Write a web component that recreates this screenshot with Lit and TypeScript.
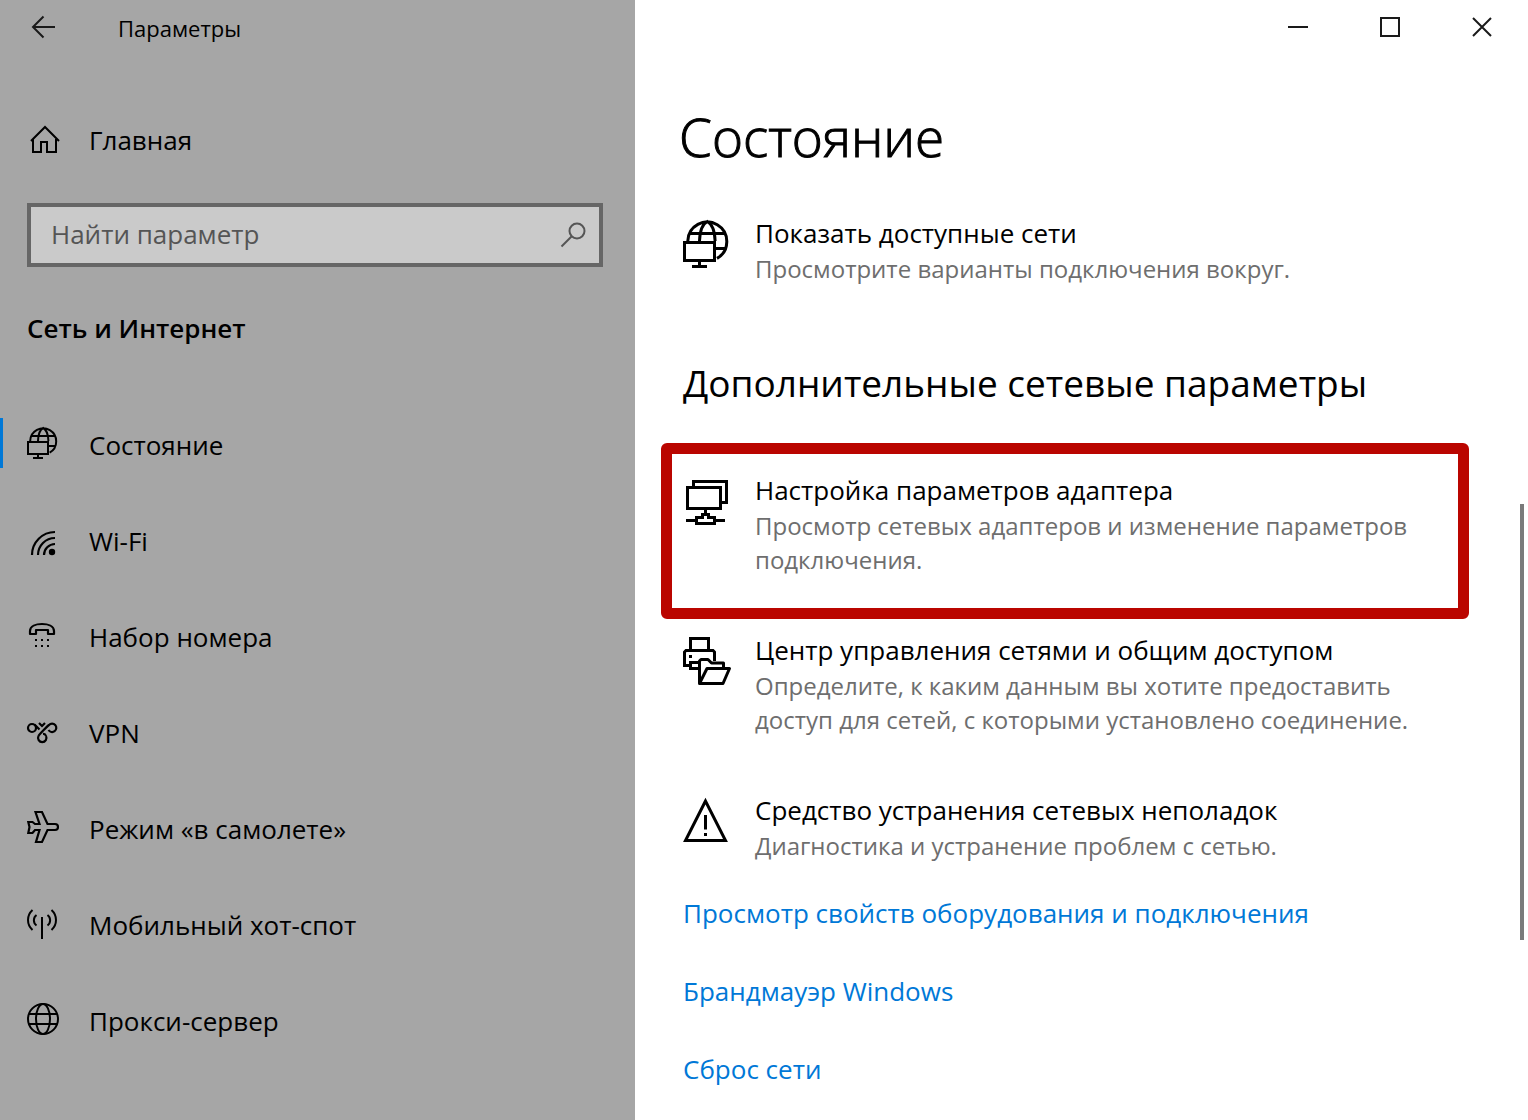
import { LitElement, html, svg, css, nothing } from "lit";
import { customElement, property, state } from "lit/decorators.js";
import { classMap } from "lit/directives/class-map.js";

interface Glyph {
  box: number;
  stroke: number;
  art: unknown;
}

const glyphs: Record<string, Glyph> = {
  back: {
    box: 24,
    stroke: 2,
    art: svg`<path d="M11.5 1.5 1 12l10.5 10.5M1 12H23" />`,
  },
  minimize: { box: 20, stroke: 2, art: svg`<path d="M0 10H20" />` },
  maximize: { box: 20, stroke: 2, art: svg`<path d="M1 1H19V19H1Z" />` },
  close: { box: 20, stroke: 2, art: svg`<path d="M1 1 19 19M19 1 1 19" />` },
  home: {
    box: 32,
    stroke: 2,
    art: svg`<path d="M2 17 16 3 30 17M4 15V28H12V18H18V28H27V15" />`,
  },
  search: {
    box: 26,
    stroke: 2,
    art: svg`<circle cx="17" cy="9" r="7.5" /><path d="M11.5 14.5 1.5 24.5" />`,
  },
  network: {
    box: 48,
    stroke: 3,
    art: svg`<path d="M4.8 21A19.5 19.5 0 1 1 34 38.4M5.5 13.5H43M33 28.5H42.5M16.5 21C16.8 12 19.5 4 24.3 1.5C29 4 31.8 12 32.1 21" />
      <path d="M1.5 22.5H31.5V40.5H1.5ZM16.5 40.5V46.5M9 46.5H24" />`,
  },
  wifi: {
    box: 32,
    stroke: 2.2,
    art: svg`<path d="M5 32A23 23 0 0 1 28 9M11 32A17 17 0 0 1 28 15M17 32A11 11 0 0 1 28 21" />
      <circle class="solid" cx="25" cy="29" r="3.2" />`,
  },
  dial: {
    box: 32,
    stroke: 2.2,
    art: svg`<path stroke-linejoin="round" d="M3 15V12C3 7 9 5 15 5S27 7 27 12V15H21V11H9V15Z" />
      <path class="solid" d="M8 20h2v2h-2zM14 20h2v2h-2zM20 20h2v2h-2zM8 26h2v2h-2zM14 26h2v2h-2zM20 26h2v2h-2z" />`,
  },
  vpn: {
    box: 32,
    stroke: 2.2,
    art: svg`<circle cx="5" cy="13" r="4" />
      <path d="M7.5 9.5 12.5 14.5M12 8 15 11 18 8" />
      <path d="M19 21A4.2 4.2 0 1 1 11.5 21C12 19.5 20 11.5 22 10A4.2 4.2 0 1 1 21.5 15" />
      <path d="M19 21C18.5 19.5 17.5 18.8 16 19" />`,
  },
  plane: {
    box: 32,
    stroke: 2.2,
    art: svg`<path d="M8.5 1H15L20.5 13H28A3 3 0 0 1 28 19H20.5L15 31H9L12.5 19H8L5.5 22H1.3L2.5 16 1.3 11H5.5L8 13H12.5Z" />`,
  },
  hotspot: {
    box: 32,
    stroke: 2,
    art: svg`<path d="M15 10V32M5.5 3C-.5 8.5-.5 17.5 5.5 23M9.5 8C6 10.5 6 16 9.5 18.5M24.5 3C30.5 8.5 30.5 17.5 24.5 23M20.5 8C24 10.5 24 16 20.5 18.5" />`,
  },
  globe: {
    box: 32,
    stroke: 2,
    art: svg`<circle cx="16" cy="16" r="15" /><ellipse cx="16" cy="16" rx="7" ry="15" />
      <path d="M2 11H30M2 21H30" />`,
  },
  adapter: {
    box: 48,
    stroke: 3,
    art: svg`<path d="M4.5 10.5H37.5V31.5H4.5ZM10.5 9V4.5H43.5V25.5H39" />
      <path d="M22.5 31.5V37M3 43.5H12M33 43.5H42M13.5 46.5V40.5H19.5V37.5H25.5V40.5H31.5V46.5Z" />`,
  },
  sharing: {
    box: 48,
    stroke: 3,
    art: svg`<path d="M7.5 13V1.5H25.5V13M7.5 28.5H1.5V15L3 13.5H30L31.5 15V24M6 25.5H15M7.5 25.5V31.5H16" />
      <path class="solid" d="M6 18h3v3h-3z" />
      <path stroke-linejoin="round" d="M16.5 46.5V24L18 22.5H25L28.5 26H40.5V31M16.5 46.5 24 31.5H46.5L40 46.5Z" />`,
  },
  warning: {
    box: 48,
    stroke: 3,
    art: svg`<path d="M22.5 4 2.5 43.5H42.5ZM22.5 18V32.5M22.5 36V39" />`,
  },
};

@customElement("app-icon")
class AppIcon extends LitElement {
  @property() name = "";

  static styles = css`
    :host {
      display: block;
      flex: none;
    }
    .glyph {
      display: block;
      width: 100%;
      height: 100%;
      fill: none;
      stroke: currentColor;
      overflow: visible;
    }
    .solid {
      fill: currentColor;
      stroke: none;
    }
  `;

  render() {
    const glyph = glyphs[this.name];
    if (!glyph) return nothing;
    return html`<svg
      class="glyph"
      viewBox="0 0 ${glyph.box} ${glyph.box}"
      stroke-width=${glyph.stroke}
      aria-hidden="true"
    >
      ${glyph.art}
    </svg>`;
  }
}

const sections = [
  { id: "status", icon: "network", label: "Состояние" },
  { id: "wifi", icon: "wifi", label: "Wi-Fi" },
  { id: "dialup", icon: "dial", label: "Набор номера" },
  { id: "vpn", icon: "vpn", label: "VPN" },
  { id: "airplane", icon: "plane", label: "Режим «в самолете»" },
  { id: "hotspot", icon: "hotspot", label: "Мобильный хот-спот" },
  { id: "proxy", icon: "globe", label: "Прокси-сервер" },
];

const availableNetworks = {
  icon: "network",
  title: "Показать доступные сети",
  text: "Просмотрите варианты подключения вокруг.",
  marked: false,
};

const advanced = [
  {
    icon: "adapter",
    title: "Настройка параметров адаптера",
    text: "Просмотр сетевых адаптеров и изменение параметров подключения.",
    marked: true,
  },
  {
    icon: "sharing",
    title: "Центр управления сетями и общим доступом",
    text: "Определите, к каким данным вы хотите предоставить доступ для сетей, с которыми установлено соединение.",
    marked: false,
  },
  {
    icon: "warning",
    title: "Средство устранения сетевых неполадок",
    text: "Диагностика и устранение проблем с сетью.",
    marked: false,
  },
];

const links = [
  "Просмотр свойств оборудования и подключения",
  "Брандмауэр Windows",
  "Сброс сети",
];

@customElement("app-root")
class AppRoot extends LitElement {
  @state() private current = "status";

  static styles = css`
    :host {
      display: block;
      font-family: "Open Sans", "Noto Sans", sans-serif;
      font-size: 26px;
      line-height: 36px;
      color: #000;
      background: #fff;
    }
    *,
    *::before,
    *::after {
      box-sizing: border-box;
    }
    a {
      color: inherit;
      text-decoration: none;
    }
    button {
      padding: 0;
      border: 0;
      background: none;
      color: inherit;
      font: inherit;
    }
    .window {
      display: grid;
      grid-template-columns: 635px minmax(0, 1fr);
      min-height: 100vh;
    }
    .sidebar {
      background: #a6a6a6;
      padding-bottom: 36px;
    }
    .titlebar {
      display: flex;
      align-items: center;
      height: 56px;
      font-size: 22px;
    }
    .back {
      display: grid;
      place-items: center;
      align-self: flex-start;
      width: 88px;
      height: 54px;
      margin-right: 30px;
      color: #1a1a1a;
    }
    .back-icon {
      width: 24px;
      height: 24px;
    }
    .home {
      display: flex;
      align-items: center;
      gap: 28px;
      height: 64px;
      margin-top: 52px;
      padding: 0 29px;
    }
    .nav-icon {
      width: 32px;
      height: 32px;
    }
    .search {
      display: flex;
      align-items: center;
      height: 64px;
      margin: 31px 32px 0 27px;
      border: 4px solid #666;
      background: #cacaca;
      color: #555;
    }
    .search-input {
      flex: 1;
      min-width: 0;
      height: 56px;
      padding: 0 0 2px 20px;
      border: 0;
      outline: 0;
      background: none;
      color: #000;
      font: inherit;
    }
    .search-input::placeholder {
      color: #555;
      opacity: 1;
    }
    .search-button {
      display: grid;
      place-items: center;
      width: 52px;
      height: 56px;
    }
    .search-icon {
      width: 26px;
      height: 26px;
    }
    .group {
      margin: 43px 27px 49px;
      font-size: 26px;
      line-height: 36px;
      font-weight: 600;
    }
    .nav-list {
      margin: 0;
      padding: 0;
      list-style: none;
    }
    .nav-link {
      display: flex;
      align-items: center;
      gap: 30px;
      height: 96px;
      padding-left: 24px;
      border-left: 3px solid transparent;
    }
    .nav-label {
      padding-top: 3px;
    }
    .nav-link.current {
      border-image: linear-gradient(
          transparent 25%,
          #0078d7 25%,
          #0078d7 75%,
          transparent 75%
        )
        1;
      border-image-width: 0 0 0 3px;
    }
    .content {
      position: relative;
      display: flex;
      flex-direction: column;
    }
    .controls {
      display: flex;
      justify-content: flex-end;
      color: #1a1a1a;
    }
    .control {
      display: grid;
      place-items: center;
      width: 92px;
      height: 54px;
    }
    .control-icon {
      width: 20px;
      height: 20px;
    }
    .page {
      padding: 45px 84px 30px 48px;
    }
    .heading {
      margin: 0 0 42px -4px;
      font-size: 53px;
      line-height: 75px;
      font-weight: 300;
      -webkit-text-stroke: 1px currentColor;
    }
    .subheading {
      margin: 71px 0 64px;
      font-size: 37px;
      line-height: 52px;
      font-weight: 400;
    }
    .entries {
      display: flex;
      flex-direction: column;
      gap: 56px;
    }
    .entry {
      position: relative;
      display: flex;
      gap: 24px;
    }
    .entry.marked::after {
      content: "";
      position: absolute;
      inset: -30px -25px -42px -22px;
      border: 11px solid #ba0500;
      border-radius: 6px;
      pointer-events: none;
    }
    .entry-icon {
      width: 48px;
      height: 48px;
      margin-top: 4px;
    }
    .entry-body {
      display: flex;
      flex-direction: column;
      gap: 2px;
      min-width: 0;
    }
    .entry-title {
      line-height: 34px;
    }
    .entry-text {
      color: #6e6e6e;
      font-size: 24px;
      line-height: 34px;
    }
    .links {
      display: flex;
      flex-direction: column;
      align-items: flex-start;
      gap: 42px;
      margin-top: 32px;
      color: #0078d7;
    }
    .thumb {
      position: absolute;
      top: 504px;
      right: 4px;
      width: 4px;
      height: 436px;
      background: #7a7a7a;
    }
  `;

  private entry(item: typeof availableNetworks) {
    return html`<a
      class=${classMap({ entry: true, marked: item.marked })}
      href="#"
    >
      <app-icon class="entry-icon" name=${item.icon}></app-icon>
      <span class="entry-body">
        <span class="entry-title">${item.title}</span>
        <span class="entry-text">${item.text}</span>
      </span>
    </a>`;
  }

  render() {
    return html`<div class="window">
      <aside class="sidebar">
        <header class="titlebar">
          <button class="back" aria-label="Назад">
            <app-icon class="back-icon" name="back"></app-icon>
          </button>
          <span>Параметры</span>
        </header>
        <a class="home" href="#">
          <app-icon class="nav-icon" name="home"></app-icon>
          <span>Главная</span>
        </a>
        <form class="search" role="search">
          <input
            class="search-input"
            type="text"
            aria-label="Найти параметр"
            placeholder="Найти параметр"
          />
          <button class="search-button" type="button" aria-label="Поиск">
            <app-icon class="search-icon" name="search"></app-icon>
          </button>
        </form>
        <h2 class="group">Сеть и Интернет</h2>
        <nav>
          <ul class="nav-list">
            ${sections.map(
              (s) => html`<li>
                <a
                  class=${classMap({
                    "nav-link": true,
                    current: s.id === this.current,
                  })}
                  href="#${s.id}"
                  @click=${() => (this.current = s.id)}
                >
                  <app-icon class="nav-icon" name=${s.icon}></app-icon>
                  <span class="nav-label">${s.label}</span>
                </a>
              </li>`
            )}
          </ul>
        </nav>
      </aside>
      <main class="content">
        <div class="controls">
          <button class="control" aria-label="Свернуть">
            <app-icon class="control-icon" name="minimize"></app-icon>
          </button>
          <button class="control" aria-label="Развернуть">
            <app-icon class="control-icon" name="maximize"></app-icon>
          </button>
          <button class="control" aria-label="Закрыть">
            <app-icon class="control-icon" name="close"></app-icon>
          </button>
        </div>
        <div class="page">
          <h1 class="heading">Состояние</h1>
          ${this.entry(availableNetworks)}
          <h2 class="subheading">Дополнительные сетевые параметры</h2>
          <div class="entries">${advanced.map((item) => this.entry(item))}</div>
          <div class="links">
            ${links.map((text) => html`<a href="#">${text}</a>`)}
          </div>
        </div>
        <div class="thumb"></div>
      </main>
    </div>`;
  }
}
